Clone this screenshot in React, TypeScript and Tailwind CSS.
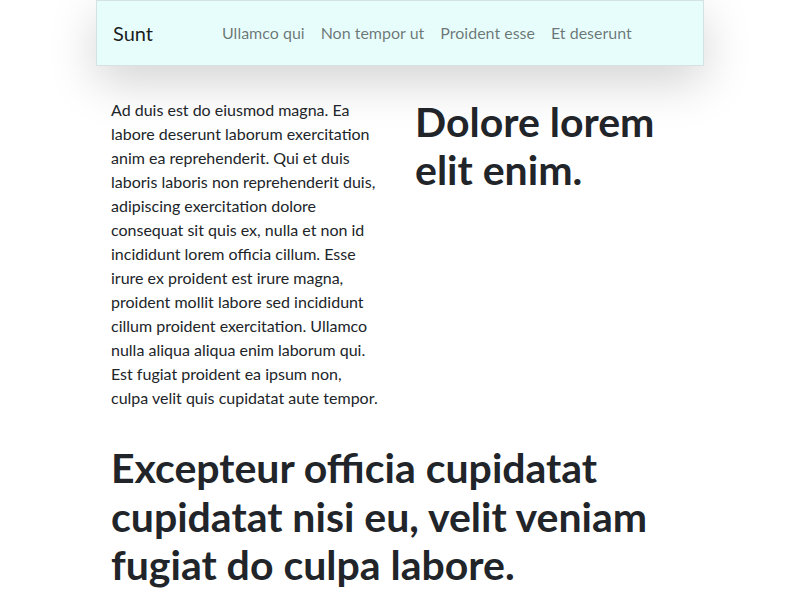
export default function App() {
  const links = ["Ullamco qui", "Non tempor ut", "Proident esse", "Et deserunt"];
  return (
    <div className="min-h-[600px] bg-white text-[#212529]" style={{ fontFamily: "Lato, 'Open Sans', sans-serif" }}>
      <div className="mx-auto w-[608px]">
        <nav className="flex h-[66px] items-center border border-[#d6e2e2] bg-[#e7fdfc] px-4 shadow-[0_16px_48px_rgba(0,0,0,0.175)]">
          <span className="w-[101px] text-[20px] leading-[30px] text-black/90">Sunt</span>
          <ul className="flex">
            {links.map((l) => (
              <li key={l} className="px-2 text-[16px] leading-6 text-black/55">
                {l}
              </li>
            ))}
          </ul>
        </nav>
        <div className="mt-[32px] grid grid-cols-2">
          <div className="px-[15px]">
            <p className="w-[271px] text-[16px] leading-6">
              Ad duis est do eiusmod magna. Ea labore deserunt laborum exercitation anim ea reprehenderit. Qui et duis
              laboris laboris non reprehenderit duis, adipiscing exercitation dolore consequat sit quis ex, nulla et non
              id incididunt lorem officia cillum. Esse irure ex proident est irure magna, proident mollit labore sed
              incididunt cillum proident exercitation. Ullamco nulla aliqua aliqua enim laborum qui. Est fugiat proident
              ea ipsum non, culpa velit quis cupidatat aute tempor.
            </p>
          </div>
          <div className="px-[15px]">
            <h1 className="text-[41px] font-bold leading-[48px]">Dolore lorem elit enim.</h1>
          </div>
        </div>
        <div className="mt-[34px] px-[15px]">
          <h1 className="text-[41px] font-bold leading-[48.5px]">
            Excepteur officia cupidatat cupidatat nisi eu, velit veniam fugiat do culpa labore.
          </h1>
        </div>
      </div>
    </div>
  );
}
